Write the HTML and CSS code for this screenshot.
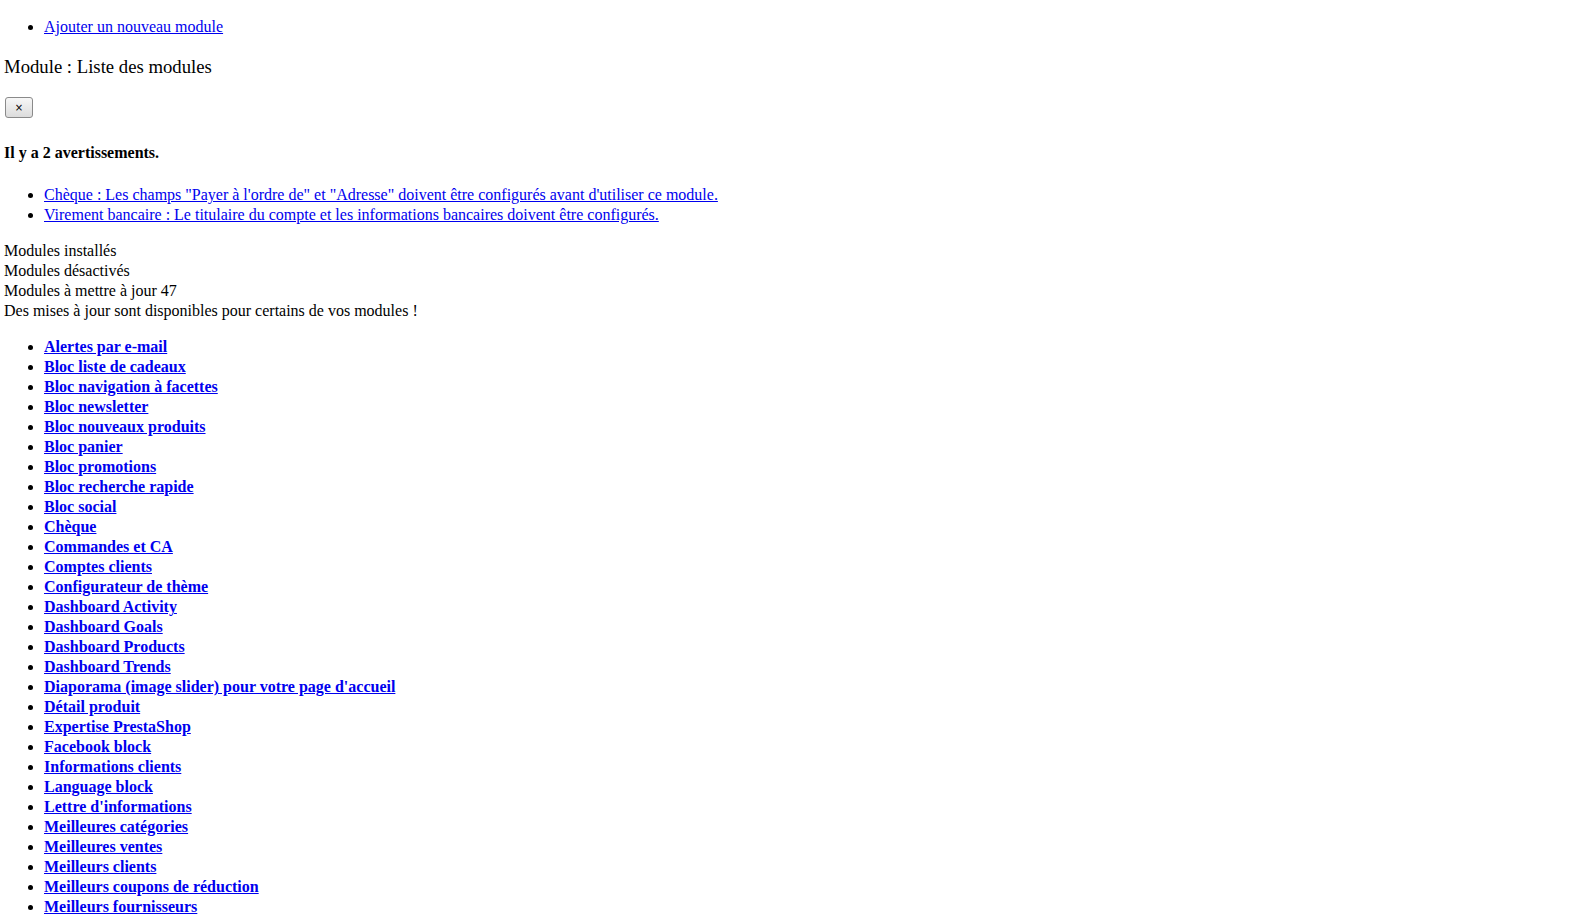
FILE: index.html
```html
<!DOCTYPE html>
<html lang="fr">
<head>
    <meta charset="UTF-8">
    <title>Modules</title>
    <link rel="stylesheet" href="styles.css">
</head>
<body>
    <ul class="toolbar">
        <li><a href="#">Ajouter un nouveau module</a></li>
    </ul>

    <h3 class="page-title">Module : Liste des modules</h3>

    <button class="close-btn" type="button">×</button>

    <h4 class="warn-title">Il y a 2 avertissements.</h4>
    <ul class="warn-list">
        <li><a href="#">Chèque : Les champs "Payer à l'ordre de" et "Adresse" doivent être configurés avant d'utiliser ce module.</a></li>
        <li><a href="#">Virement bancaire : Le titulaire du compte et les informations bancaires doivent être configurés.</a></li>
    </ul>

    <div class="tabs">
        <div>Modules installés</div>
        <div>Modules désactivés</div>
        <div>Modules à mettre à jour 47</div>
        <div>Des mises à jour sont disponibles pour certains de vos modules !</div>
    </div>

    <ul class="module-list">
        <li><a href="#">Alertes par e-mail</a></li>
        <li><a href="#">Bloc liste de cadeaux</a></li>
        <li><a href="#">Bloc navigation à facettes</a></li>
        <li><a href="#">Bloc newsletter</a></li>
        <li><a href="#">Bloc nouveaux produits</a></li>
        <li><a href="#">Bloc panier</a></li>
        <li><a href="#">Bloc promotions</a></li>
        <li><a href="#">Bloc recherche rapide</a></li>
        <li><a href="#">Bloc social</a></li>
        <li><a href="#">Chèque</a></li>
        <li><a href="#">Commandes et CA</a></li>
        <li><a href="#">Comptes clients</a></li>
        <li><a href="#">Configurateur de thème</a></li>
        <li><a href="#">Dashboard Activity</a></li>
        <li><a href="#">Dashboard Goals</a></li>
        <li><a href="#">Dashboard Products</a></li>
        <li><a href="#">Dashboard Trends</a></li>
        <li><a href="#">Diaporama (image slider) pour votre page d'accueil</a></li>
        <li><a href="#">Détail produit</a></li>
        <li><a href="#">Expertise PrestaShop</a></li>
        <li><a href="#">Facebook block</a></li>
        <li><a href="#">Informations clients</a></li>
        <li><a href="#">Language block</a></li>
        <li><a href="#">Lettre d'informations</a></li>
        <li><a href="#">Meilleures catégories</a></li>
        <li><a href="#">Meilleures ventes</a></li>
        <li><a href="#">Meilleurs clients</a></li>
        <li><a href="#">Meilleurs coupons de réduction</a></li>
        <li><a href="#">Meilleurs fournisseurs</a></li>
    </ul>
</body>
</html>
```

FILE: styles.css
```css
body {
    margin: 4px;
    font-family: "Liberation Serif", "Times New Roman", serif;
    font-size: 16px;
    line-height: 20px;
    color: #000;
    background: #fff;
}

a {
    color: #0000ee;
}

ul {
    padding-left: 40px;
}

.toolbar {
    margin: 13px 0 19px;
}

.page-title {
    font-size: 18.72px;
    font-weight: normal;
    line-height: 22px;
    margin: 0 0 19px;
}

.close-btn {
    display: block;
    width: 28px;
    height: 21px;
    margin-left: 1px;
    padding: 0;
    font-family: "DejaVu Sans", sans-serif;
    font-size: 10px;
    color: #000;
    background: linear-gradient(#f7f7f7, #dcdcdc);
    border: 1px solid #8a8a8a;
    border-radius: 3px;
}

.warn-title {
    font-size: 16px;
    font-weight: bold;
    margin: 25px 0 22px;
}

.warn-list {
    margin: 0 0 16px;
}

.tabs {
    margin: 0 0 16px;
}

.module-list {
    margin: 0;
    font-weight: bold;
}
```
